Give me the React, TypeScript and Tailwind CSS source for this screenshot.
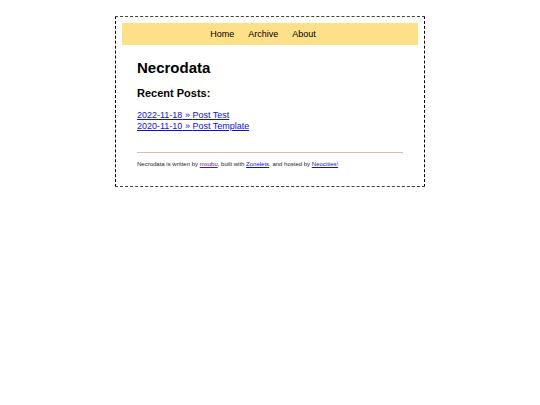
import React from "react";

type Post = { date: string; title: string };

const posts: Post[] = [
  { date: "2022-11-18", title: "Post Test" },
  { date: "2020-11-10", title: "Post Template" },
];

const navItems = ["Home", "Archive", "About"];

const linkCls = "text-[#1010dc] underline";

export default function App() {
  return (
    <div className="px-4 py-4 font-['Liberation_Sans',Arial,sans-serif] text-black">
      <div className="mx-auto max-w-[310px] border border-dashed border-x-black border-y-neutral-700 p-1.5">
        <nav className="bg-[#ffe08a] py-1">
          <ul className="flex justify-center gap-3.5 pr-3.5 text-[9px] leading-[14px]">
            {navItems.map((item) => (
              <li key={item}>
                <a href="#">{item}</a>
              </li>
            ))}
          </ul>
        </nav>

        <main className="px-[15px] pt-3.5">
          <h1 className="text-[15px] leading-[18px] font-bold">Necrodata</h1>
          <h2 className="mt-[9px] text-[11px] leading-[14px] font-bold">Recent Posts:</h2>
          <ul className="mt-2.5 text-[9px] leading-[11px]">
            {posts.map((p) => (
              <li key={p.date}>
                <a href="#" className={linkCls}>
                  {p.date} » {p.title}
                </a>
              </li>
            ))}
          </ul>
        </main>

        <footer className="mx-[15px] mt-5 border-t border-[#d2c0a4] pt-[7px] pb-3 text-[6px] leading-[8px] text-neutral-800">
          Necrodata is written by <a href="#" className="text-[#551a8b] underline">mxubu</a>, built with{" "}
          <a href="#" className={linkCls}>Zonelets</a>, and hosted by{" "}
          <a href="#" className={linkCls}>Neocities!</a>
        </footer>
      </div>
    </div>
  );
}
